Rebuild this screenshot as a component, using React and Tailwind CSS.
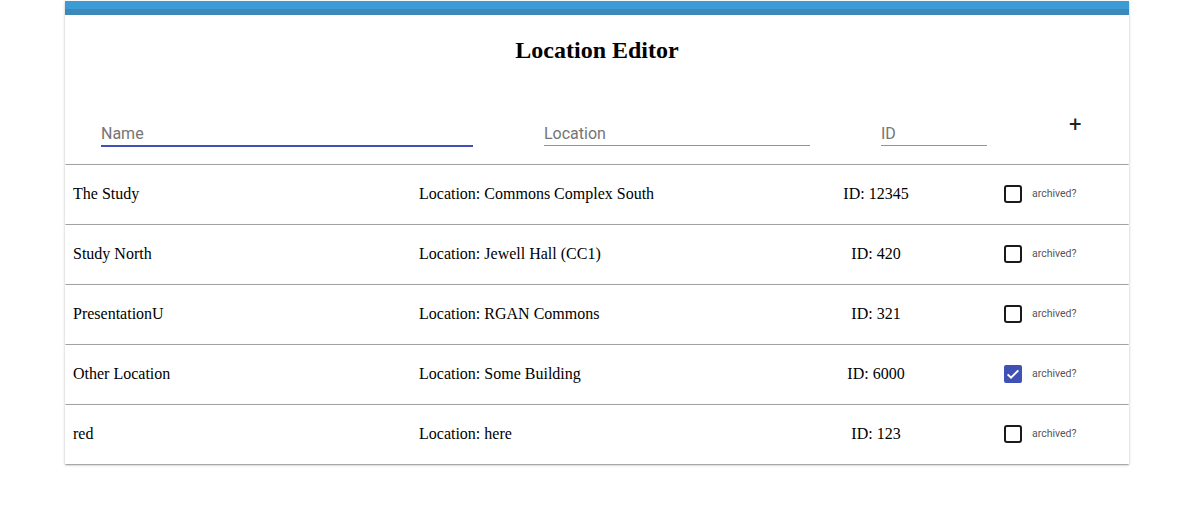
import React from "react";

const rows = [
  { name: "The Study", loc: "Commons Complex South", id: "12345", archived: false },
  { name: "Study North", loc: "Jewell Hall (CC1)", id: "420", archived: false },
  { name: "PresentationU", loc: "RGAN Commons", id: "321", archived: false },
  { name: "Other Location", loc: "Some Building", id: "6000", archived: true },
  { name: "red", loc: "here", id: "123", archived: false },
];

const shadow =
  "shadow-[0_1px_3px_0_rgba(0,0,0,0.2),0_1px_1px_0_rgba(0,0,0,0.14),0_2px_1px_-1px_rgba(0,0,0,0.12)]";

function Checkbox({ checked }) {
  if (checked) {
    return (
      <div className="w-[18px] h-[18px] rounded-[2px] bg-[#3f51b5] flex items-center justify-center">
        <svg width="16" height="16" viewBox="0 0 24 24">
          <path d="M4 12.5l5 5L20 6.5" fill="none" stroke="#fff" strokeWidth="3" />
        </svg>
      </div>
    );
  }
  return <div className="w-[18px] h-[18px] rounded-[3px] border-2 border-[#1a1a1a]" />;
}

function Field({ label, width, focused }) {
  return (
    <div className={`flex flex-col ${width}`}>
      <div className="h-[27px] pt-[4px] flex items-center font-['Roboto',sans-serif] text-[16px] text-[#757575]">
        {label}
      </div>
      <div className={focused ? "h-[2px] bg-[#3f51b5]" : "h-px bg-[#949494] mb-px"} />
    </div>
  );
}

export default function App() {
  return (
    <div className="w-[1186px] h-[516px] bg-white font-['Liberation_Serif',serif] text-black">
      <div className={`ml-[65px] w-[1064px] mt-px bg-white ${shadow}`}>
        <div className="h-[8px] bg-[#3c9ad5]" />
        <div className="h-[6px] bg-[#3c89b9]" />
        <div className="h-[149px] flex flex-col">
          <h2 className="text-[24px] font-bold text-center mt-[20px] leading-[30px]">Location Editor</h2>
          <div className="flex items-end mt-[53px] pl-[36px]">
            <Field label="Name" width="w-[372px]" focused />
            <div className="ml-[71px]">
              <Field label="Location" width="w-[266px]" />
            </div>
            <div className="ml-[71px]">
              <Field label="ID" width="w-[106px]" />
            </div>
            <div className="ml-[82px] text-[22px] leading-none font-['Roboto',sans-serif] text-[#222] self-start mt-[-4px]">
              +
            </div>
          </div>
        </div>
      </div>
      <div className="ml-[65px] w-[1064px] flex flex-col gap-px mt-px">
        {rows.map((r) => (
          <div key={r.name} className={`h-[59px] bg-white flex items-center pl-[8px] pb-px text-[16px] ${shadow}`}>
            <div className="w-[346px]">{r.name}</div>
            <div className="w-[397px]">Location: {r.loc}</div>
            <div className="w-[120px] text-center">ID: {r.id}</div>
            <div className="ml-[68px] flex items-center gap-[10px]">
              <Checkbox checked={r.archived} />
              <span className="font-['Roboto',sans-serif] text-[10.5px] text-[#555]">archived?</span>
            </div>
          </div>
        ))}
      </div>
    </div>
  );
}
